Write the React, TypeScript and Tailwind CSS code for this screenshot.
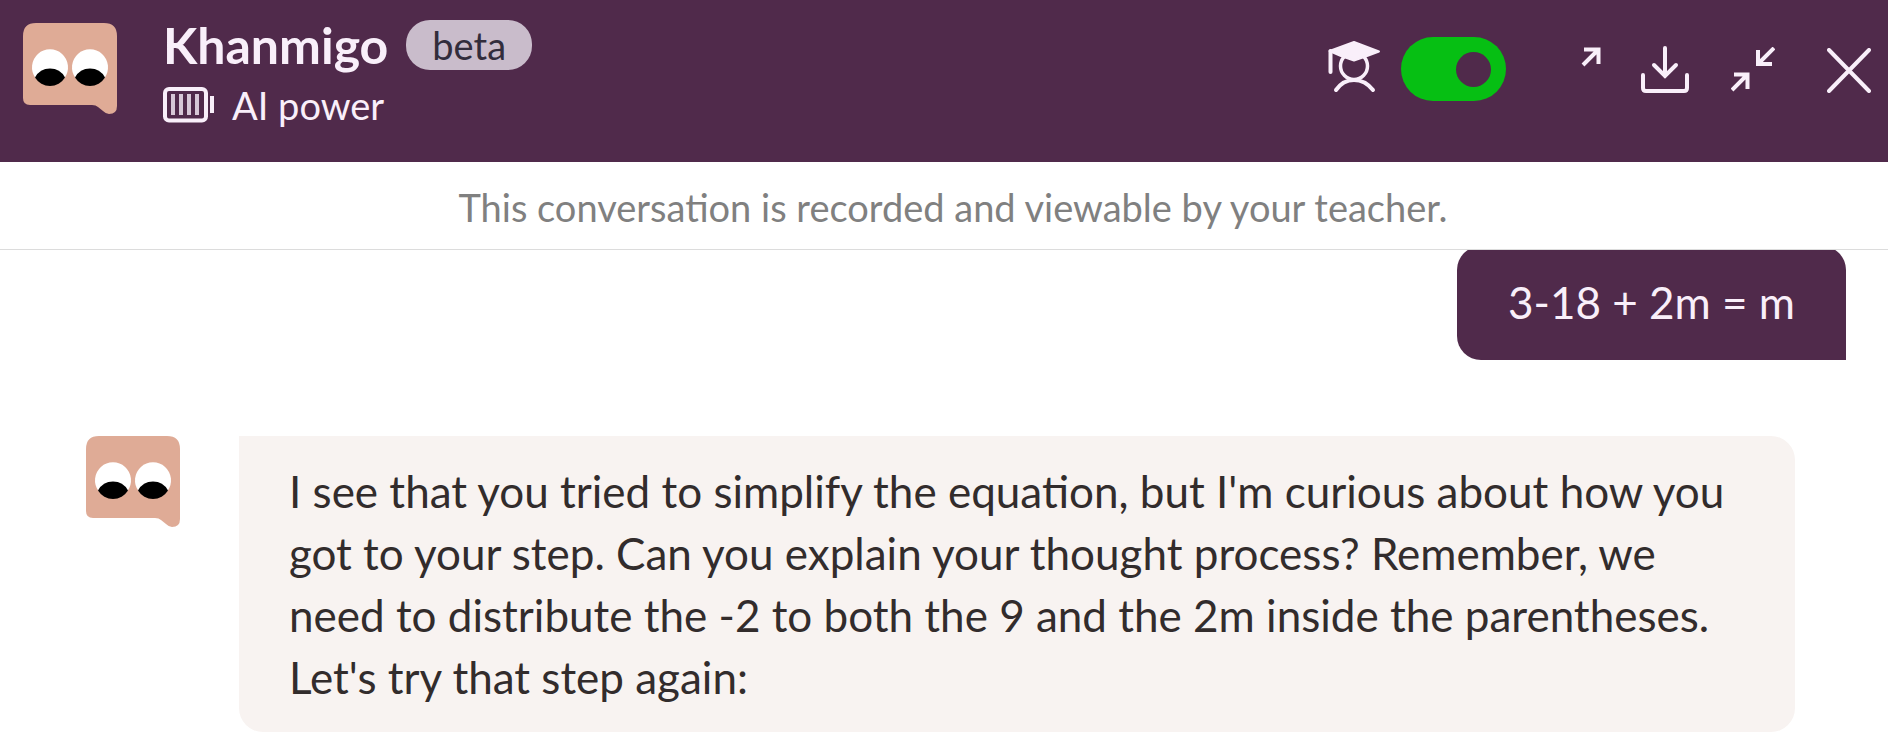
import { useState } from "react";

const notice = "This conversation is recorded and viewable by your teacher.";

const messages = [
  { id: 1, from: "student", text: "3-18 + 2m = m" },
  {
    id: 2,
    from: "khanmigo",
    text: "I see that you tried to simplify the equation, but I'm curious about how you got to your step. Can you explain your thought process? Remember, we need to distribute the -2 to both the 9 and the 2m inside the parentheses. Let's try that step again:",
  },
];

function Avatar() {
  return (
    <svg width="94" height="91" viewBox="0 0 94 91" className="shrink-0" role="img" aria-label="Khanmigo">
      <path
        d="M13 0H81Q94 0 94 13V83Q94 91 86 91Q83 91 80 88L75 84Q73 82 69 82H7Q0 82 0 75V13Q0 0 13 0Z"
        fill="#dfab96"
      />
      <path d="M12.5 55A18 18 0 1 1 41.5 55Z" fill="#fff" />
      <path d="M52.5 55A18 18 0 1 1 81.5 55Z" fill="#fff" />
      <path d="M12 54.5A17 17 0 0 1 42 54.5A17.5 17.5 0 0 1 12 54.5Z" fill="#000" />
      <path d="M52 54.5A17 17 0 0 1 82 54.5A17.5 17.5 0 0 1 52 54.5Z" fill="#000" />
    </svg>
  );
}

function BatteryIcon() {
  return (
    <svg width="51" height="36" viewBox="0 0 51 36" fill="none" stroke="currentColor" aria-hidden="true">
      <rect x="2" y="2" width="41" height="31.5" rx="4" strokeWidth="4" />
      <path d="M10 7V28M18 7V28M26 7V28M34 7V28" strokeWidth="4" opacity="0.8" />
      <path d="M49 9V26" strokeWidth="4" />
    </svg>
  );
}

function StudentIcon() {
  return (
    <svg width="54" height="58" viewBox="0 0 54 58" fill="none" stroke="currentColor" strokeLinecap="round" aria-hidden="true">
      <path d="M3.5 11V32" strokeWidth="4" />
      <path
        d="M2.5 11L27 2L52 11.5L40 16L27 20.5L14 16Z"
        fill="currentColor"
        strokeWidth="2"
        strokeLinejoin="round"
      />
      <circle cx="27" cy="26" r="13.5" strokeWidth="3.5" />
      <path d="M9 50Q16 40 27 40Q38 40 46 50" strokeWidth="4" />
    </svg>
  );
}

function ExpandIcon() {
  return (
    <svg width="20" height="20" viewBox="0 0 20 20" fill="none" stroke="currentColor" strokeWidth="4" aria-hidden="true">
      <path d="M2 18L17 3M3 2.5H17.5V17" />
    </svg>
  );
}

function DownloadIcon() {
  return (
    <svg width="48" height="48" viewBox="0 0 48 48" fill="none" stroke="currentColor" strokeWidth="4" strokeLinecap="round" aria-hidden="true">
      <path d="M24 3V31M13 20L24 31L35 20M2 30V43Q2 46 5 46H43Q46 46 46 43V30" />
    </svg>
  );
}

function MinimizeIcon() {
  return (
    <svg width="44" height="46" viewBox="0 0 44 46" fill="none" stroke="currentColor" strokeWidth="4" aria-hidden="true">
      <path d="M43 1L28 16M27 3V17H41" />
      <path d="M1 43L16 28M3 27.5H16.5V42" />
    </svg>
  );
}

function CloseIcon() {
  return (
    <svg width="44" height="45" viewBox="0 0 44 45" fill="none" stroke="currentColor" strokeWidth="4" strokeLinecap="round" aria-hidden="true">
      <path d="M2 2L42 43M42 2L2 43" />
    </svg>
  );
}

function Header() {
  const [tutoring, setTutoring] = useState(true);

  return (
    <header className="flex h-[162px] items-start justify-between bg-[#502a4b] pr-[17px] pl-[23px] text-[#f9effa]">
      <div className="flex gap-[46px]">
        <div className="pt-[23px]">
          <Avatar />
        </div>
        <div className="pt-[15px]">
          <div className="flex items-center gap-[18px]">
            <h1 className="text-[50px] leading-[60px] font-bold">Khanmigo</h1>
            <span className="rounded-[24px] bg-[#c9bccb] px-[26px] text-[38px] leading-[50px] text-[#322d3c]">
              beta
            </span>
          </div>
          <div className="flex items-center gap-[18px]">
            <BatteryIcon />
            <span className="text-[38px] leading-[60px]">AI power</span>
          </div>
        </div>
      </div>

      <div className="flex items-center pt-[37px]">
        <div className="flex items-center gap-5">
          <StudentIcon />
          <label className="flex cursor-pointer">
            <input
              type="checkbox"
              role="switch"
              aria-label="Tutor mode"
              checked={tutoring}
              onChange={(e) => setTutoring(e.target.checked)}
              className="peer sr-only"
            />
            <span className="flex h-[64px] w-[105px] items-center rounded-full bg-gray-500 px-[15px] peer-checked:justify-end peer-checked:bg-[#06bf13]">
              <span className="size-[35px] rounded-full bg-[#502a4b]" />
            </span>
          </label>
        </div>
        <div className="ml-[75px] flex items-end">
          <button type="button" aria-label="Expand" className="pb-[26px]">
            <ExpandIcon />
          </button>
          <button type="button" aria-label="Download" className="ml-10">
            <DownloadIcon />
          </button>
          <button type="button" aria-label="Minimize" className="ml-[42px]">
            <MinimizeIcon />
          </button>
          <button type="button" aria-label="Close" className="ml-[52px]">
            <CloseIcon />
          </button>
        </div>
      </div>
    </header>
  );
}

export default function App() {
  return (
    <div className="min-h-screen bg-white font-['Lato',sans-serif]">
      <Header />
      <p className="border-b border-[#dcdcdc] pt-[17px] pb-[14px] pl-[18px] text-center text-[38px] leading-[56px] text-[#808080]">
        {notice}
      </p>
      <main className="flex flex-col gap-[76px] overflow-hidden">
        {messages.map((message) =>
          message.from === "student" ? (
            <div key={message.id} className="-mt-1 flex justify-end pr-[42px]">
              <p className="rounded-[24px] rounded-br-none bg-[#502a4b] px-[51px] pt-[25px] pb-[27px] text-[44px] leading-[62px] text-[#f9effa]">
                {message.text}
              </p>
            </div>
          ) : (
            <div key={message.id} className="flex items-start gap-[59px] pr-[93px] pl-[86px]">
              <Avatar />
              <p className="flex-1 rounded-[24px] rounded-tl-none bg-[#f8f3f1] px-[50px] py-6 text-[44px] leading-[62px] text-[#322c2c]">
                {message.text}
              </p>
            </div>
          )
        )}
      </main>
    </div>
  );
}
